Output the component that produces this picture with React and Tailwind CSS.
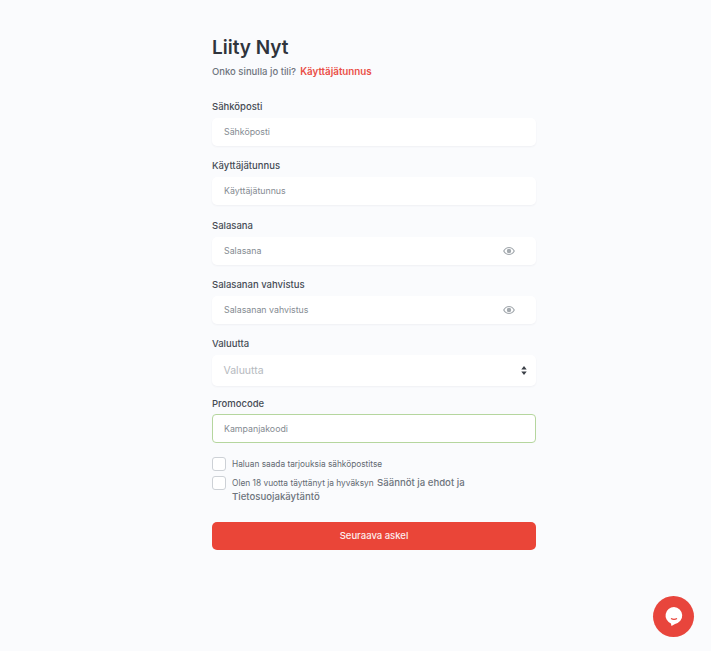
import React from "react";

const font = { fontFamily: "Inter, 'Liberation Sans', sans-serif" };

function Eye() {
  return (
    <svg width="12" height="12" viewBox="0 0 24 24" fill="none" stroke="#a3a9ae" strokeWidth="2.400" className="shrink-0">
      <path d="M1.500 12C4 7.500 7.600 5 12 5s8 2.500 10.500 7c-2.500 4.500-6.100 7-10.500 7S4 16.500 1.500 12z" />
      <circle cx="12" cy="12" r="3.200" fill="#a3a9ae" />
    </svg>
  );
}

function Field({ label, placeholder, eye, mt }) {
  return (
    <div className={mt}>
      <div className="text-[9.500px] leading-[12px] font-medium text-[#464c55] mb-[5px]">{label}</div>
      <div className="h-[28px] bg-white rounded-[5px] shadow-[0_1px_2px_rgba(30,40,70,0.05)] flex items-center justify-between pl-[12px] pr-[21px]">
        <span className="text-[8.800px] text-[#858b92]">{placeholder}</span>
        {eye && <Eye />}
      </div>
    </div>
  );
}

export default function App() {
  return (
    <div style={font} className="relative min-h-[651px] w-full bg-[#fafbfd] overflow-hidden">
      <div className="w-[324px] ml-[212px] pt-[36px]">
        <h1 className="text-[19px] leading-[24px] font-semibold text-[#2f343c]">Liity Nyt</h1>
        <p className="mt-[6px] text-[9.500px] leading-[12px] font-medium text-[#6f757d]">
          Onko sinulla jo tili? <span className="ml-[1.500px] text-[9.800px] text-[#ea4f47] font-semibold">Käyttäjätunnus</span>
        </p>
        <Field label="Sähköposti" placeholder="Sähköposti" mt="mt-[23px]" />
        <Field label="Käyttäjätunnus" placeholder="Käyttäjätunnus" mt="mt-[14px]" />
        <Field label="Salasana" placeholder="Salasana" eye mt="mt-[15px]" />
        <Field label="Salasanan vahvistus" placeholder="Salasanan vahvistus" eye mt="mt-[14px]" />
        <div className="mt-[14px]">
          <div className="text-[9.500px] leading-[12px] font-medium text-[#464c55] mb-[5px]">Valuutta</div>
          <div className="h-[31px] bg-white rounded-[5px] shadow-[0_1px_2px_rgba(30,40,70,0.05)] flex items-center justify-between pl-[11.500px] pr-[9px]">
            <span className="text-[10.500px] text-[#b5b9be]">Valuutta</span>
            <svg width="6" height="9" viewBox="0 0 6 9" fill="#3a3f46">
              <path d="M3 0L5.700 3.500H.3zM3 9L.3 5.500h5.400z" />
            </svg>
          </div>
        </div>
        <div className="mt-[12px]">
          <div className="text-[9.500px] leading-[12px] font-medium text-[#464c55] mb-[4px]">Promocode</div>
          <div className="h-[29px] bg-white rounded-[4px] border border-[#b5d69e] flex items-center pl-[11px]">
            <span className="text-[8.800px] text-[#858b92]">Kampanjakoodi</span>
          </div>
        </div>
        <div className="mt-[14px] flex items-center gap-[6px]">
          <span className="w-[14px] h-[14px] rounded-[3px] bg-white border border-[#cdd1d6] shrink-0" />
          <span className="text-[8.300px] leading-[12px] text-[#636a72]">Haluan saada tarjouksia sähköpostitse</span>
        </div>
        <div className="mt-[5px] flex items-start gap-[6px]">
          <span className="w-[14px] h-[14px] rounded-[3px] bg-white border border-[#cdd1d6] shrink-0" />
          <div className="text-[8.350px] leading-[14px] text-[#636a72]">
            <div>
              Olen 18 vuotta täyttänyt ja hyväksyn{" "}
              <span className="ml-[1px] text-[9.600px] font-medium text-[#6d747c]">Säännöt ja ehdot ja</span>
            </div>
            <div className="text-[9.600px] font-medium text-[#6d747c]">Tietosuojakäytäntö</div>
          </div>
        </div>
        <button className="mt-[18px] w-full h-[28px] rounded-[5px] bg-[#ea4538] text-[#fdeeee] text-[9.500px] font-medium flex items-center justify-center">
          Seuraava askel
        </button>
      </div>
      <div className="absolute left-[653px] top-[596px] w-[41px] h-[41px] rounded-full bg-[#e8453c] flex items-center justify-center">
        <svg width="20" height="21" viewBox="0 0 20 21">
          <path d="M10 1a8.500 8.500 0 0 1 1 16.900L7.500 20l-.6-2.600A8.500 8.500 0 0 1 10 1z" fill="#fff" />
          <path d="M7 12.500c1.800 1 4.200 1 6 0" stroke="#e8453c" strokeWidth="1.300" fill="none" />
        </svg>
      </div>
    </div>
  );
}
